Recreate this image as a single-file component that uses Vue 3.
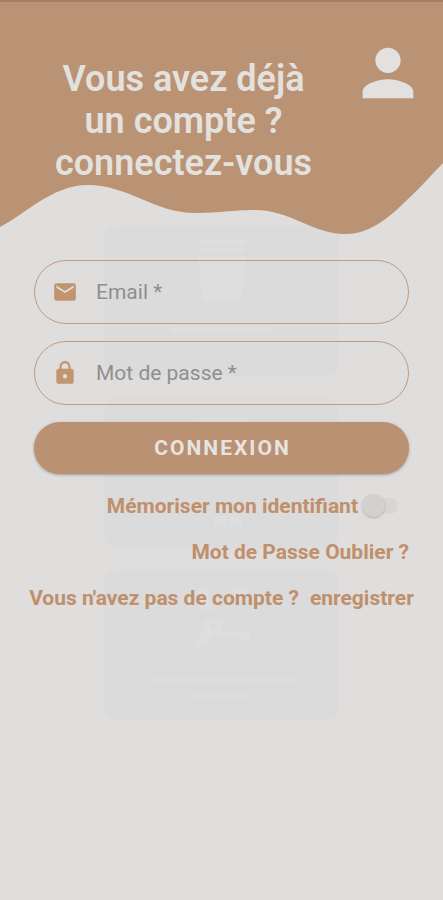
<template>
  <div class="page">
    <!-- Faded menu behind the login sheet -->
    <div class="backdrop" aria-hidden="true">
      <div v-for="card in cards" :key="card.name" class="backdrop-card">
        <svg viewBox="0 0 160 150" class="backdrop-icon">
          <path :d="card.icon" />
        </svg>
      </div>
    </div>

    <header class="header">
      <svg class="wave" viewBox="0 0 443 240" preserveAspectRatio="none">
        <path
          d="M0 0H443V161C431 173 420 186 408 197C386 219 368 232 345 232C313 232 290 208 255 208C231 208 222 211 195 211C155 211 128 183 88 183C52 183 24 213 0 225Z"
        />
      </svg>
      <h1 class="title">
        Vous avez déjà<br />
        un compte ?<br />
        connectez-vous
      </h1>
      <svg class="avatar" viewBox="0 0 24 24">
        <path
          d="M12 12c2.21 0 4-1.79 4-4s-1.79-4-4-4-4 1.79-4 4 1.79 4 4 4zm0 2c-2.67 0-8 1.34-8 4v2h16v-2c0-2.66-5.33-4-8-4z"
        />
      </svg>
    </header>

    <form class="form" @submit.prevent="handleLogin">
      <label class="field">
        <svg class="field-icon" viewBox="0 0 24 24">
          <path
            d="M20 4H4c-1.100 0-1.990.9-1.990 2L2 18c0 1.100.9 2 2 2h16c1.100 0 2-.9 2-2V6c0-1.100-.9-2-2-2zm0 4l-8 5-8-5V6l8 5 8-5v2z"
          />
        </svg>
        <input
          v-model="email"
          type="email"
          placeholder="Email *"
          aria-label="Email"
        />
      </label>

      <label class="field">
        <svg class="field-icon" viewBox="0 0 24 24">
          <path
            d="M18 8h-1V6c0-2.760-2.240-5-5-5S7 3.240 7 6v2H6c-1.100 0-2 .9-2 2v10c0 1.100.9 2 2 2h12c1.100 0 2-.9 2-2V10c0-1.100-.9-2-2-2zm-6 9c-1.100 0-2-.9-2-2s.9-2 2-2 2 .9 2 2-.9 2-2 2zm3.100-9H8.900V6c0-1.710 1.390-3.100 3.100-3.100s3.100 1.390 3.100 3.100v2z"
          />
        </svg>
        <input
          v-model="password"
          type="password"
          placeholder="Mot de passe *"
          aria-label="Mot de passe"
        />
      </label>

      <button type="submit" class="submit">CONNEXION</button>

      <label class="remember">
        Mémoriser mon identifiant
        <input v-model="remember" type="checkbox" class="switch" />
      </label>
      <a href="#" class="forgot">Mot de Passe Oublier ?</a>
    </form>

    <p class="register">
      <span>Vous n'avez pas de compte ?</span>
      <a href="#">enregistrer</a>
    </p>
  </div>
</template>

<script setup>
import { ref } from "vue";

const email = ref("");
const password = ref("");
const remember = ref(false);

const cards = [
  {
    name: "cup",
    icon: "M58 14H102V19H58ZM58 22H102V26H58ZM56 30H104L99 75H61ZM30 101H130V107H30Z",
  },
  { name: "menu", icon: "M56 20H104V26H56ZM72 118H84V128H72ZM88 118H100V128H88Z" },
  {
    name: "delivery",
    icon: "M56 18H66V26L72 40H56ZM92 18H108V26H100V32H92ZM62 50H80V60L108 64V74L92 66H72L64 75H52L62 62ZM68 54V60H74V54ZM8 108H158V112H8ZM50 124H108V128H50Z",
  },
];

const handleLogin = () => {
  console.log("Login", email.value, remember.value);
};
</script>

<style>
body {
  margin: 0;
  background: #dfdedc;
}
</style>

<style scoped>
.page {
  position: relative;
  min-height: 100vh;
  overflow: hidden;
  background: #dfdedc;
  font-family: Roboto, "Liberation Sans", sans-serif;
  color: #c08f6c;
}

/* Backdrop */
.backdrop {
  position: absolute;
  top: 226px;
  left: 0;
  right: 0;
  display: flex;
  flex-direction: column;
  align-items: center;
  gap: 22px;
}

.backdrop-card {
  width: 53%;
  height: 150px;
  border-radius: 14px;
  background: #dbdbdb;
  text-align: center;
}

.backdrop-icon {
  width: 160px;
  height: 150px;
  fill: #dedede;
}

/* Header */
.header {
  position: relative;
  display: flex;
  align-items: flex-start;
  box-sizing: border-box;
  height: 242px;
  padding: 33px 17px 0;
  border-top: 2px solid #a97b64;
}

.wave {
  position: absolute;
  top: 0;
  left: 0;
  width: 100%;
  height: 100%;
  fill: #ba9375;
}

.title {
  position: relative;
  flex: 1;
  margin: 23px 0 0;
  font-size: 36px;
  line-height: 42px;
  font-weight: 600;
  text-align: center;
  color: #e3e1de;
}

.avatar {
  position: relative;
  width: 76px;
  height: 76px;
  fill: #e2e1df;
}

/* Form */
.form {
  position: relative;
  display: flex;
  flex-direction: column;
  padding: 18px 34px 0;
}

.field {
  display: flex;
  align-items: center;
  gap: 18px;
  box-sizing: border-box;
  height: 64px;
  margin-bottom: 17px;
  padding: 0 17px;
  border: 1px solid #c39a7c;
  border-radius: 32px;
}

.field-icon {
  flex: none;
  width: 26px;
  height: 26px;
  fill: #c0956f;
}

.field input {
  flex: 1;
  min-width: 0;
  padding: 0;
  border: none;
  outline: none;
  background: transparent;
  font-family: inherit;
  font-size: 21px;
  color: #555;
}

.field input::placeholder {
  color: #8f8f8e;
  opacity: 1;
}

.submit {
  height: 52px;
  margin-bottom: 9px;
  padding: 0 0 0 2px;
  border: none;
  border-radius: 26px;
  background: #ba9172;
  box-shadow: 0 1px 3px rgba(0, 0, 0, 0.3);
  font-family: inherit;
  font-size: 21px;
  font-weight: 700;
  letter-spacing: 2px;
  color: #e6e4e1;
  cursor: pointer;
}

.remember,
.forgot,
.register {
  font-size: 21px;
  line-height: 46px;
  font-weight: 700;
}

.remember {
  display: flex;
  align-items: center;
  justify-content: flex-end;
  gap: 4px;
  padding-right: 11px;
}

.switch {
  position: relative;
  appearance: none;
  width: 36px;
  height: 16px;
  margin: 0;
  border-radius: 8px;
  background: #d7d6d5;
  cursor: pointer;
}

.switch::before {
  content: "";
  position: absolute;
  top: -4px;
  left: 0;
  width: 23px;
  height: 23px;
  border-radius: 50%;
  background: #d2d1d0;
  box-shadow: 0 1px 2px rgba(0, 0, 0, 0.2);
}

.switch:checked::before {
  left: 13px;
  background: #ba9172;
}

.forgot {
  align-self: flex-end;
}

a {
  color: inherit;
  text-decoration: none;
}

.register {
  position: relative;
  display: flex;
  justify-content: center;
  gap: 11px;
  margin: 0;
  white-space: nowrap;
}
</style>
